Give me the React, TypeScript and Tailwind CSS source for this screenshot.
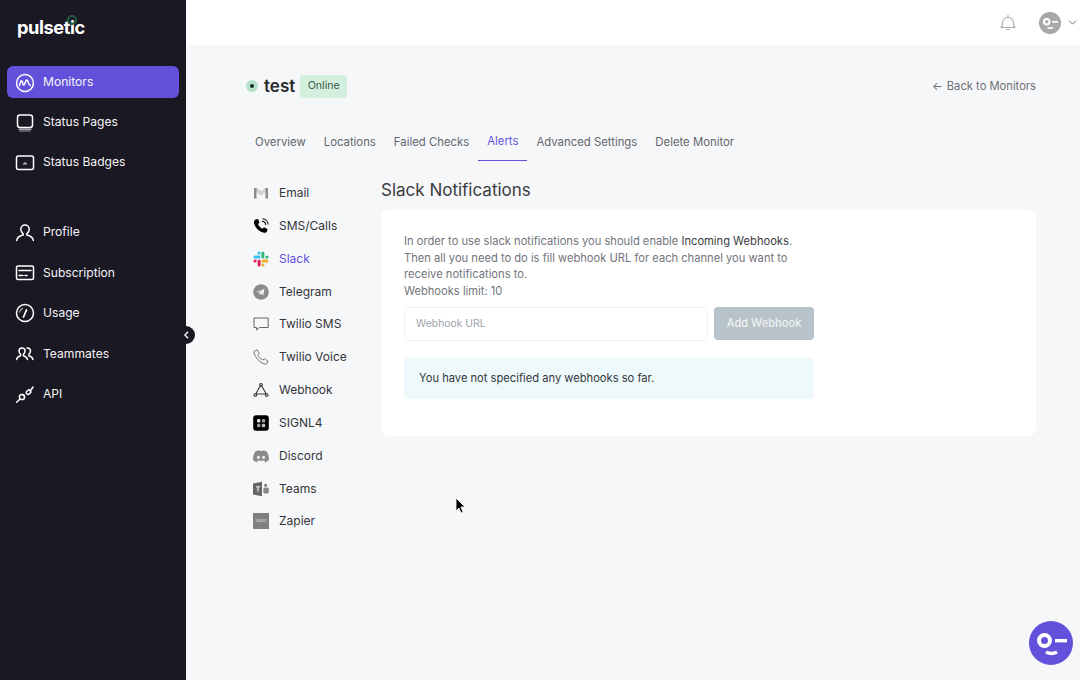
import React from "react";

const Ic = ({ children, className = "" }: { children: React.ReactNode; className?: string }) => (
  <svg viewBox="0 0 20 20" fill="none" stroke="currentColor" strokeWidth="1.500" strokeLinecap="round" strokeLinejoin="round" className={className}>
    {children}
  </svg>
);

const side = "w-[20px] h-[20px] text-white shrink-0";

const sideTop = [
  { label: "Monitors", active: true, mt: "", icon: <Ic className={side}><circle cx="10" cy="10" r="8.400" /><path d="M4.500 12.500c1-5.500 2.200-6 3-3s1.200 3.500 2.300 1 1.500-4.500 2.600-3 1.200 5 3 5" /></Ic> },
  { label: "Status Pages", mt: "mt-[8px]", icon: <Ic className={side}><rect x="2.500" y="2" width="15" height="12.500" rx="2.500" /><path d="M4 16.200h12" opacity=".6" /><path d="M5 18h10" opacity=".4" /></Ic> },
  { label: "Status Badges", mt: "mt-[8px]", icon: <Ic className={side}><rect x="1.500" y="3" width="17" height="13.500" rx="2" /><path d="M7.500 11.500h5l-1.500-2h-2z" fill="currentColor" stroke="none" opacity=".7" /></Ic> },
];

const sideBottom = [
  { label: "Profile", icon: <Ic className={side}><path d="M10 2a4.200 4.200 0 0 0-4.200 4.200c0 2 1 3.600 2.400 4.600v1.200c-2.600.7-6 1.500-6.500 5.500M10 2a4.200 4.200 0 0 1 4.200 4.200c0 2-1 3.600-2.400 4.600v1.200c2.600.7 6 1.500 6.500 5.500" /></Ic> },
  { label: "Subscription", icon: <Ic className={side}><rect x="1.500" y="3" width="17" height="13.500" rx="1.500" /><path d="M4 7.500h12M4 12.500h4M10 12.500h2" /></Ic> },
  { label: "Usage", icon: <Ic className={side}><circle cx="10" cy="10" r="8.500" /><path d="M8.500 14l3-7" strokeWidth="1.800" /><path d="M4.500 9a6 6 0 0 1 3-3.500" opacity=".5" /></Ic> },
  { label: "Teammates", icon: <Ic className={side}><path d="M7 4a3 3 0 0 0-3 3c0 1.500.7 2.500 1.600 3.300v1.500c-1.800.5-3.600 1-4 3.700M7 4a3 3 0 0 1 3 3c0 1.500-.7 2.500-1.600 3.300v1.500c1.800.5 3.600 1 4 3.700" /><path d="M12 4a3 3 0 0 1 3.500 3c0 1.500-.7 2.500-1.600 3.300v1.500c1.800.5 3.600 1 4 3.700" /></Ic> },
  { label: "API", icon: <Ic className={side}><circle cx="7" cy="13" r="2.600" /><path d="M5 15l-3.300 3.200M8 10.500l1.500 2" /><path d="M11.500 7.500l2.500-2 2 2.500-2 2.300a2 2 0 0 1-2.500-2.800zM16 6l2-3" /></Ic> },
];

const gray = "#8b8b8b";
const alertIcon = "w-[16px] h-[16px] shrink-0";

const alerts: { label: string; active?: boolean; icon: React.ReactNode }[] = [
  { label: "Email", icon: <svg viewBox="0 0 16 16" className={alertIcon}><path d="M1 3h2.500L8 7l4.500-4H15v10.500h-2.500V6.500L8 10.500 3.500 6.500v7H1z" fill={gray} /><path d="M3.500 3L8 7l4.500-4v3.500L8 10.500 3.500 6.500z" fill="#d3d3d3" /></svg> },
  { label: "SMS/Calls", icon: <svg viewBox="0 0 16 16" fill="none" className={alertIcon}><path d="M2.500 1.500L5 1l1.500 3.500L5 6c.6 2 2.500 4 4.500 4.800l1.500-1.500 3.500 1.700-.5 2.500c-.5 1-1.500 1.500-3 1.300C6.500 14 1.500 9.500 1 4.500c0-1.500.5-2.500 1.500-3z" fill="#000" /><path d="M9 3.200a4 4 0 0 1 3.800 3.800M9.500 .8A6.200 6.200 0 0 1 15.200 6.500" stroke="#000" strokeWidth="1.100" /></svg> },
  { label: "Slack", active: true, icon: <svg viewBox="0 0 16 16" className={alertIcon}><path d="M6 .5a1.500 1.500 0 0 0 0 3h1.500V2A1.500 1.500 0 0 0 6 .5zM2 4.600a1.500 1.500 0 0 0 0 3h4a1.500 1.500 0 0 0 0-3z" fill="#36c5f0" /><path d="M15.500 6.100a1.500 1.500 0 0 0-3 0v1.500H14a1.500 1.500 0 0 0 1.500-1.500zM11.400 2a1.500 1.500 0 0 0-3 0v4a1.500 1.500 0 0 0 3 0z" fill="#2eb67d" /><path d="M10 15.500a1.500 1.500 0 0 0 0-3H8.500V14a1.500 1.500 0 0 0 1.500 1.500zM14 11.400a1.500 1.500 0 0 0 0-3h-4a1.500 1.500 0 0 0 0 3z" fill="#ecb22e" /><path d="M.5 10a1.500 1.500 0 0 0 3 0V8.500H2A1.500 1.500 0 0 0 .5 10zM4.600 14a1.500 1.500 0 0 0 3 0v-4a1.500 1.500 0 0 0-3 0z" fill="#e01e5a" /></svg> },
  { label: "Telegram", icon: <svg viewBox="0 0 16 16" className={alertIcon}><circle cx="8" cy="8" r="7.800" fill={gray} /><path d="M3.500 8l8-3.200-1.300 6.700-2.500-1.800-1.200 1.200-.3-2.200 3.500-2.700-4.500 2.500z" fill="#f1f1f1" /></svg> },
  { label: "Twilio SMS", icon: <svg viewBox="0 0 16 16" fill="none" stroke="#555" strokeWidth=".9" strokeLinejoin="round" className={alertIcon}><path d="M1 2h14.200v9.500H6.500L3.500 14v-2.500H1z" /></svg> },
  { label: "Twilio Voice", icon: <svg viewBox="0 0 16 16" fill="none" stroke="#666" strokeWidth=".9" strokeLinejoin="round" className={alertIcon}><path d="M1.500 2L4 .8l2.300 3.500L4.800 6c.8 2 2.600 3.800 5 5l1.700-1.300 3.600 2.500-1.200 2.300c-1 .8-2.500.7-4 0C6 12.800 2.500 8.500 1 4c-.2-.8 0-1.500.5-2z" /></svg> },
  { label: "Webhook", icon: <svg viewBox="0 0 16 16" fill="none" stroke="#333" strokeWidth="1.100" strokeLinecap="round" className={alertIcon}><circle cx="8" cy="2.800" r="1.300" /><circle cx="2.300" cy="13" r="1.300" /><circle cx="13.700" cy="13" r="1.300" /><path d="M7.300 4L3 11.500M8.700 4l4.300 7.500M3.800 12h8.500" /></svg> },
  { label: "SIGNL4", icon: <svg viewBox="0 0 16 16" className={alertIcon}><rect x=".2" y=".2" width="15.600" height="15.600" rx="3" fill="#000" /><rect x="4" y="4" width="3.400" height="3.400" rx="1" fill="#ddd" /><rect x="8.800" y="4" width="3.400" height="3.400" rx="1" fill="#999" /><rect x="4" y="8.800" width="3.400" height="3.400" rx="1" fill="#999" /><rect x="8.800" y="8.800" width="3.400" height="3.400" rx="1" fill="#bbb" /></svg> },
  { label: "Discord", icon: <svg viewBox="0 0 16 16" className={alertIcon}><path d="M13.500 3.200A13 13 0 0 0 10.200 2.200l-.4.800a12 12 0 0 0-3.600 0l-.4-.8A13 13 0 0 0 2.500 3.200C.4 6.300-.2 9.300.1 12.300c1.400 1 2.700 1.600 4 2l.9-1.400-1.400-.7.300-.3c2.700 1.200 5.500 1.200 8.200 0l.3.300-1.400.7.900 1.400c1.300-.4 2.600-1 4-2 .3-3.500-.6-6.500-2.400-9.100z" fill={gray} /><ellipse cx="5.400" cy="9.200" rx="1.400" ry="1.500" fill="#f6f7f9" /><ellipse cx="10.600" cy="9.200" rx="1.400" ry="1.500" fill="#f6f7f9" /></svg> },
  { label: "Teams", icon: <svg viewBox="0 0 16 16" className={alertIcon}><path d="M0 2.500l9-1.800v14.600L0 13.500z" fill="#666" /><path d="M3 5.800h4M5 5.800v5" stroke="#eee" strokeWidth="1.100" /><circle cx="12.600" cy="4.200" r="1.500" fill="#777" /><rect x="10.300" y="6.600" width="5.500" height="5.800" rx="1.500" fill="#888" /></svg> },
  { label: "Zapier", icon: <span className="flex h-[16px] w-[16px] shrink-0 items-center justify-center bg-[#7f7f7f] text-[4px] leading-none text-[#d8d8d8]">zapier</span> },
];

const tabs = ["Overview", "Locations", "Failed Checks", "Alerts", "Advanced Settings", "Delete Monitor"];

const Face = ({ className }: { className: string }) => (
  <svg viewBox="0 0 44 44" className={className}>
    <circle cx="15.500" cy="19.500" r="5.500" fill="none" stroke="#fff" strokeWidth="4" />
    <rect x="26" y="18" width="12" height="3.400" fill="#fff" />
    <path d="M17 31c3.500 1.800 7.500 1.800 11 0" fill="none" stroke="#fff" strokeWidth="3.400" />
  </svg>
);

export default function App() {
  return (
    <div className="relative flex h-[680px] w-[1080px] overflow-hidden bg-[#f6f7f9] font-['Inter',sans-serif]">
      <aside className="flex w-[186px] shrink-0 flex-col bg-[#1a1823] px-[7px]">
        <div className="relative mt-[15px] ml-[10px] h-[25px] text-[18.200px] font-bold leading-[25px] tracking-[-0.4px] text-white">
          pulsetic
          <span className="absolute left-[50px] top-[0px] h-[10px] w-[10px] rounded-full border-2 border-[#1f5a45]" />
        </div>
        <nav className="mt-[26px] flex flex-col">
          {sideTop.map((s) => (
            <div key={s.label} className={`flex h-[32px] items-center gap-[8px] rounded-[6px] pl-[8px] pt-[1px] text-[12.100px] text-[#f4f4f6] ${s.mt} ${s.active ? "bg-[#6351dc]" : ""}`}>
              {s.icon}
              <span>{s.label}</span>
            </div>
          ))}
        </nav>
        <nav className="mt-[38px] flex flex-col gap-[8.400px]">
          {sideBottom.map((s) => (
            <div key={s.label} className="flex h-[32px] items-center gap-[8px] pl-[8px] pt-[1px] text-[12.100px] text-[#f4f4f6]">
              {s.icon}
              <span>{s.label}</span>
            </div>
          ))}
        </nav>
      </aside>

      <div className="flex min-w-0 flex-1 flex-col">
        <header className="flex h-[45px] shrink-0 items-center justify-end bg-white pr-[3px] text-[#9a9a9a]">
          <svg viewBox="0 0 16 18" fill="none" stroke="#a8a8a8" strokeWidth="1.100" strokeLinejoin="round" className="mr-[23px] h-[18px] w-[16px]">
            <path d="M1 13.500c1.200-1 1.600-2 1.600-4.500 0-3 2-5.500 5.400-5.500s5.400 2.500 5.400 5.500c0 2.500.4 3.500 1.600 4.500z" />
            <path d="M8 1.200v2.300M6.500 15.500h3" strokeLinecap="round" />
          </svg>
          <span className="mr-[7px] h-[22px] w-[22px] rounded-full bg-[#a8a8a8]">
            <Face className="h-[22px] w-[22px]" />
          </span>
          <svg viewBox="0 0 10 6" fill="none" stroke="#555" strokeWidth="1" className="h-[5px] w-[9px]">
            <path d="M.8.800L5 5 9.200.800" />
          </svg>
        </header>

        <main className="flex-1 pl-[60px] pr-[44px]">
          <div className="mt-[29px] flex h-[24px] items-center">
            <span className="flex h-[12px] w-[12px] items-center justify-center rounded-full bg-[#b5e3c9]">
              <span className="h-[4px] w-[4px] rounded-full bg-[#1b2a24]" />
            </span>
            <h1 className="ml-[6px] text-[17px] font-semibold leading-[24px] text-[#2b2b2f]">test</h1>
            <span className="ml-[5px] flex h-[23px] w-[47px] items-center justify-center rounded-[3px] bg-[#d3f0de] text-[10.700px] text-[#3b5a49]">Online</span>
            <span className="ml-auto flex items-center gap-[4px] text-[11.200px] text-[#6b7075]">
              <span>←</span>
              <span>Back to Monitors</span>
            </span>
          </div>

          <div className="mt-[30px] flex h-[33px] items-start gap-[18px] pl-[9px] text-[11.350px] text-[#62666c]">
            {tabs.map((t) => (
              <div key={t} className={`flex h-[33px] items-center pb-[4px] ${t === "Alerts" ? "-mx-[9px] border-b border-[#6351dc] px-[9px] text-[#6351dc]" : ""}`}>
                {t}
              </div>
            ))}
          </div>

          <div className="mt-[17px] flex">
            <div className="flex w-[135px] shrink-0 flex-col gap-[10.850px] pl-[7px] pt-[4px]">
              {alerts.map((a) => (
                <div key={a.label} className={`flex h-[22px] items-center gap-[10px] text-[12px] ${a.active ? "text-[#6351dc]" : "text-[#33353a]"}`}>
                  {a.icon}
                  <span>{a.label}</span>
                </div>
              ))}
            </div>
            <div className="flex-1">
              <h2 className="h-[24px] text-[17px] font-normal leading-[24px] text-[#3a3c41]">Slack Notifications</h2>
              <section className="mt-[8px] h-[226px] rounded-[8px] bg-white pl-[23px] pt-[23px]">
                <div className="w-[410px]">
                  <p className="text-[11.170px] leading-[16.700px] text-[#71747a]">
                    In order to use slack notifications you should enable <span className="text-[#3a3c41]">Incoming Webhooks</span>.
                    <br />
                    Then all you need to do is fill webhook URL for each channel you want to receive notifications to.
                    <br />
                    Webhooks limit: 10
                  </p>
                  <div className="mt-[7px] flex gap-[6px]">
                    <div className="flex h-[34px] flex-1 items-center rounded-[5px] border border-[#f0f1f3] pl-[11px] text-[10.400px] text-[#a0a3a8]">Webhook URL</div>
                    <div className="flex h-[33px] w-[100px] items-center justify-center rounded-[4px] bg-[#b7c3c8] text-[11.100px] font-medium text-[#eef1f2]">Add Webhook</div>
                  </div>
                  <div className="mt-[17px] flex h-[41px] items-center rounded-[4px] bg-[#eef9fc] pl-[15px] text-[11.170px] text-[#34363b]">You have not specified any webhooks so far.</div>
                </div>
              </section>
            </div>
          </div>
        </main>
      </div>

      <button className="absolute left-[177px] top-[326px] flex h-[18px] w-[18px] items-center justify-center rounded-full bg-[#1a1823]">
        <svg viewBox="0 0 6 10" fill="none" stroke="#fff" strokeWidth="1.600" className="h-[8px] w-[5px]"><path d="M5 1L1 5l4 4" /></svg>
      </button>

      <svg viewBox="0 0 12 18" className="absolute left-[455px] top-[497px] h-[18px] w-[12px]">
        <path d="M1 1v13l3-3 2 5 2-1-2-5h4z" fill="#000" stroke="#fff" strokeWidth=".8" />
      </svg>

      <div className="absolute left-[1029px] top-[621px] h-[44px] w-[44px] rounded-full bg-[#6351dc]">
        <Face className="h-[44px] w-[44px]" />
      </div>
    </div>
  );
}
